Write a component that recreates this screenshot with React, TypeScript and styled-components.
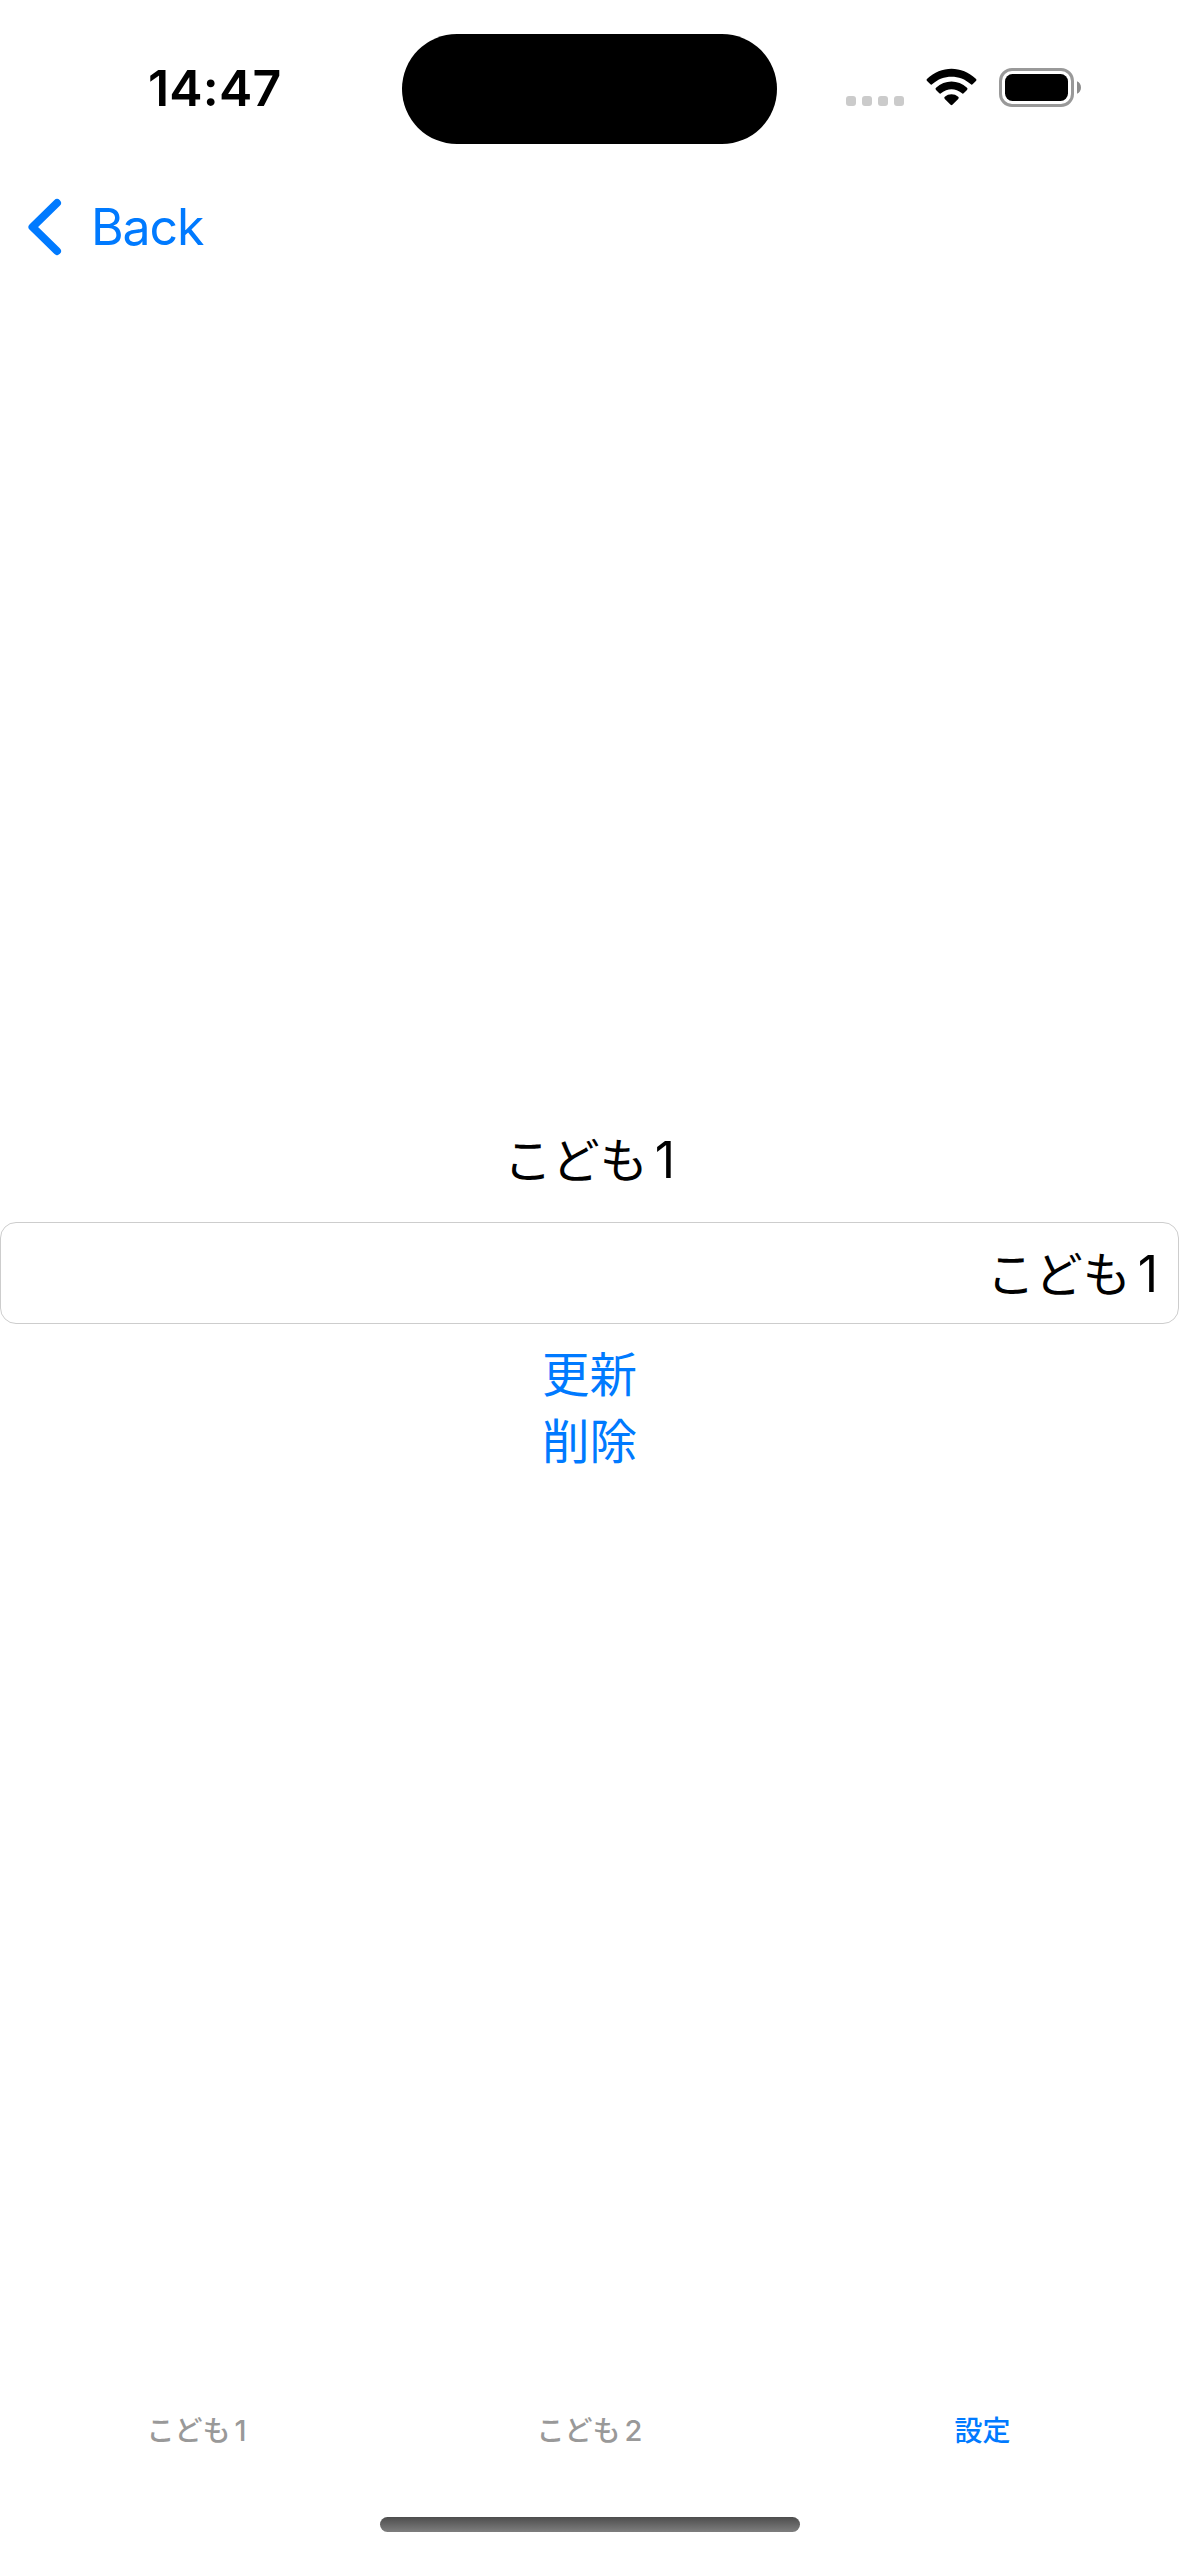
import React from 'react';
import styled, { createGlobalStyle } from 'styled-components';

const Global = createGlobalStyle`
  * { box-sizing: border-box; }
  body { margin: 0; background: #fff; }
`;

const BLUE = '#007aff';

const Screen = styled.div`
  display: flex;
  flex-direction: column;
  width: 1179px;
  height: 2556px;
  overflow: hidden;
  background: #fff;
  color: #000;
  font-family: Inter, 'Noto Sans CJK JP', sans-serif;
`;

const StatusBar = styled.header`
  display: grid;
  grid-template-columns: 402px 375px 402px;
  height: 177px;
  padding-top: 33.5px;
  align-items: start;
`;

const Clock = styled.div`
  padding-left: 148px;
  padding-top: 24px;
  font-size: 50px;
  line-height: 60px;
  font-weight: 600;
  letter-spacing: 0.2px;
`;

const Island = styled.div`
  height: 110.5px;
  border-radius: 55.5px;
  background: #000;
`;

const StatusIcons = styled.div`
  display: flex;
  align-items: flex-end;
  height: 74px;
  padding-left: 69px;
`;

const Signal = styled.div`
  display: flex;
  gap: 6px;
  margin: 0 22px 1.5px 0;
`;

const SignalDot = styled.i`
  width: 10px;
  height: 10px;
  border-radius: 3px;
  background: #cbcbcb;
`;

const WifiIcon = styled.svg`
  width: 51px;
  height: 38px;
  margin: 0 22px 1.5px 0;
`;

const BatteryIcon = styled.svg`
  width: 84px;
  height: 39px;
  margin-bottom: 0.5px;
`;

const NavBar = styled.nav`
  display: flex;
  height: 100px;
  align-items: center;
  padding-left: 25.5px;
`;

const BackButton = styled.button`
  display: flex;
  align-items: center;
  gap: 28.5px;
  padding: 0;
  border: 0;
  background: none;
  color: ${BLUE};
  font: 400 50px/60px Inter, sans-serif;
  letter-spacing: -1.1px;
`;

const Chevron = styled.svg`
  width: 37px;
  height: 60px;
`;

const Content = styled.main`
  display: flex;
  flex: 1;
  flex-direction: column;
  align-items: center;
  padding-top: 853px;
`;

const Label = styled.span<{ $digitSize: number; $gap: number }>`
  display: inline-flex;
  align-items: baseline;
  white-space: nowrap;

  b {
    margin-left: ${(p) => p.$gap}px;
    font-size: ${(p) => p.$digitSize}px;
    font-weight: inherit;
  }
`;

const Title = styled.div`
  display: flex;
  height: 60px;
  margin-bottom: 32px;
  align-items: center;
  font-size: 48px;
  line-height: 60px;
`;

const Field = styled.div`
  display: flex;
  width: 1179px;
  height: 102px;
  align-items: center;
  justify-content: flex-end;
  padding: 2px 20px 0 0;
  border: 1.5px solid #cdcdcd;
  border-radius: 16px;
  font-size: 48px;
  line-height: 60px;
`;

const Actions = styled.div`
  display: flex;
  flex-direction: column;
  padding-top: 14px;
`;

const Action = styled.button`
  height: 67px;
  padding: 0;
  border: 0;
  background: none;
  color: ${BLUE};
  font: 400 47.5px/67px 'Noto Sans CJK JP', sans-serif;
`;

const TabBar = styled.nav`
  display: grid;
  grid-template-columns: repeat(3, 393px);
  height: 106px;
`;

const Tab = styled.div<{ $active?: boolean }>`
  display: flex;
  height: 40px;
  align-items: center;
  justify-content: center;
  color: ${(p) => (p.$active ? BLUE : '#999')};
  font-size: 28px;
  line-height: 40px;
  font-weight: 500;
`;

const HomeArea = styled.footer`
  display: flex;
  height: 39px;
  justify-content: center;
`;

const HomeIndicator = styled.div`
  width: 420px;
  height: 15px;
  border-radius: 7.5px;
  background: linear-gradient(#4d4d4d, #7e7e7e);
`;

const ChildName = ({ n, small }: { n: number; small?: boolean }) => (
  <Label $digitSize={small ? 29 : 50} $gap={small ? 4 : 7}>
    こども<b>{n}</b>
  </Label>
);

export default function App() {
  return (
    <Screen>
      <Global />
      <StatusBar>
        <Clock>14:47</Clock>
        <Island />
        <StatusIcons>
          <Signal>
            <SignalDot />
            <SignalDot />
            <SignalDot />
            <SignalDot />
          </Signal>
          <WifiIcon viewBox="0 0 51 38">
            <path d="M1.2 10.8 Q0 11.9 1.1 13L4.4 16.2Q5.3 17.1 6.4 16.1C17 6.3 34 6.3 44.6 16.1Q45.7 17.1 46.6 16.2L49.9 13Q51 11.9 49.8 10.8C36-2.6 15-2.6 1.2 10.8Z" />
            <path d="M10 19.7Q8.9 20.8 10 21.9L13.3 25.2Q14.2 26.1 15.3 25.1C21.3 20 29.7 20 35.7 25.1Q36.8 26.1 37.7 25.2L41 21.9Q42.1 20.8 41 19.7C32 11.4 19 11.4 10 19.7Z" />
            <path d="M18.8 28.7Q17.6 29.8 18.8 31L24.6 36.8Q25.5 37.7 26.4 36.8L32.2 31Q33.4 29.8 32.2 28.7C28.4 25.4 22.6 25.4 18.8 28.7Z" />
          </WifiIcon>
          <BatteryIcon viewBox="0 0 84 39">
            <rect x="1.5" y="1.5" width="72" height="36" rx="11.5" fill="none" stroke="#999" strokeWidth="3" />
            <rect x="6" y="6" width="63" height="27" rx="7.5" />
            <path d="M78 13.2C83.3 15 83.3 24 78 25.8Z" fill="#8c8c8c" />
          </BatteryIcon>
        </StatusIcons>
      </StatusBar>
      <NavBar>
        <BackButton>
          <Chevron viewBox="0 0 37 60">
            <path d="M31 6L6.5 30L31 54" fill="none" stroke={BLUE} strokeWidth="8" strokeLinecap="round" strokeLinejoin="round" />
          </Chevron>
          Back
        </BackButton>
      </NavBar>
      <Content>
        <Title>
          <ChildName n={1} />
        </Title>
        <Field>
          <ChildName n={1} />
        </Field>
        <Actions>
          <Action>更新</Action>
          <Action>削除</Action>
        </Actions>
      </Content>
      <TabBar>
        <Tab>
          <ChildName n={1} small />
        </Tab>
        <Tab>
          <ChildName n={2} small />
        </Tab>
        <Tab $active>設定</Tab>
      </TabBar>
      <HomeArea>
        <HomeIndicator />
      </HomeArea>
    </Screen>
  );
}
